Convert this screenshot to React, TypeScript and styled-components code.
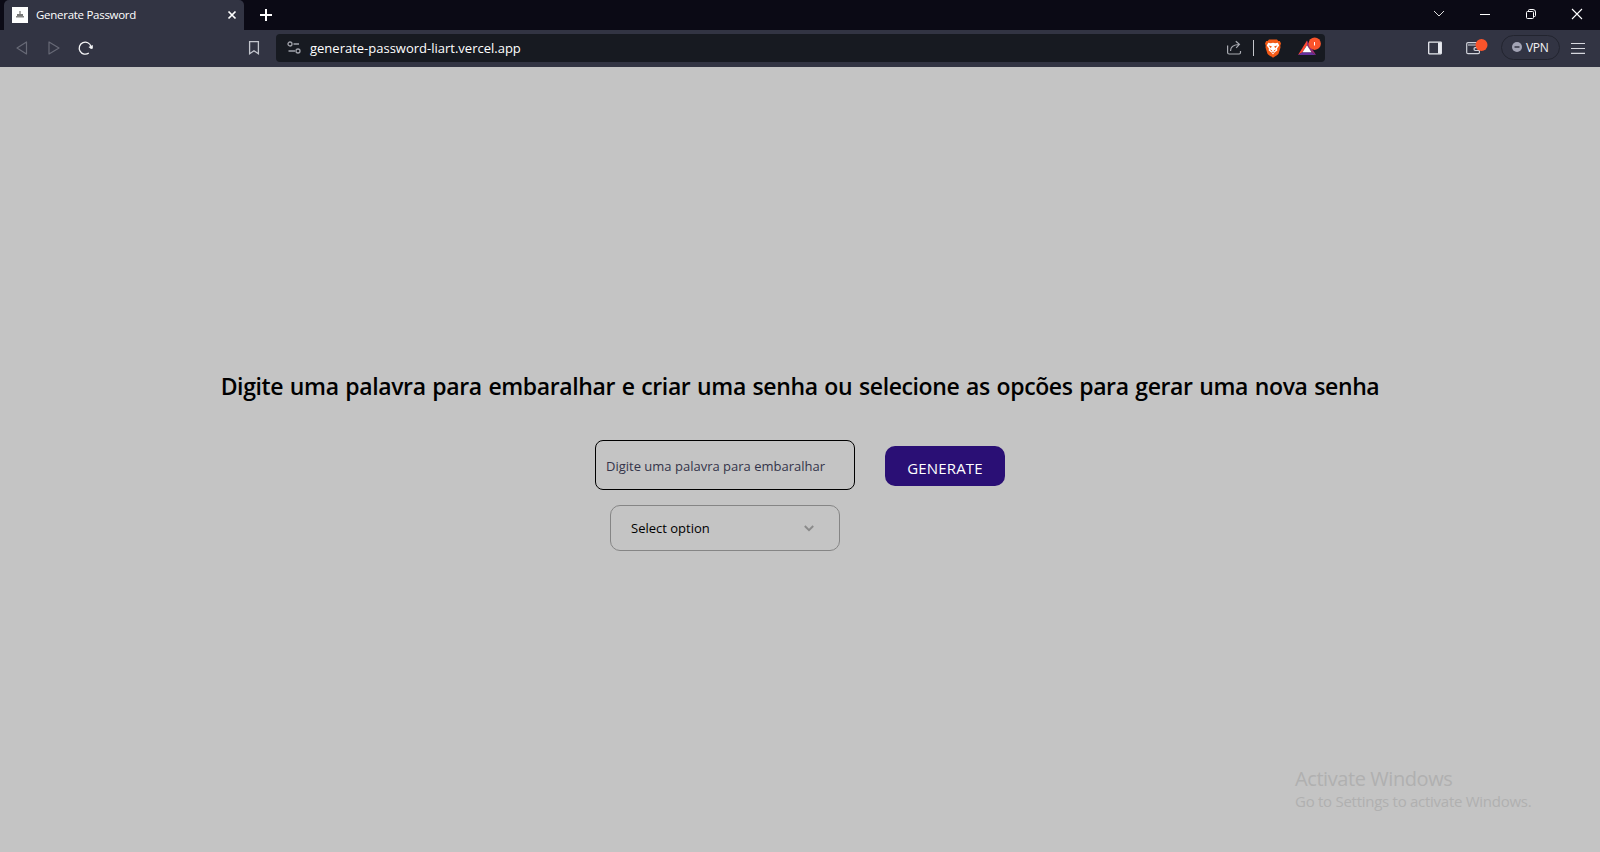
import React from "react";
import styled, { createGlobalStyle } from "styled-components";

const GlobalStyle = createGlobalStyle`
  * { box-sizing: border-box; }
  body { margin: 0; overflow: hidden; background: #c4c4c4; font-family: "Open Sans", "Noto Sans", sans-serif; }
  svg { display: block; flex: none; }
`;

const Window = styled.div`
  width: 1600px;
  height: 852px;
  display: flex;
  flex-direction: column;
  overflow: hidden;
`;

const TabBar = styled.header`
  height: 30px;
  flex: none;
  display: flex;
  background: #0b0a15;
  padding-left: 4px;
`;

const Tab = styled.div`
  width: 240px;
  height: 30px;
  display: flex;
  align-items: center;
  padding: 0 7px 0 8px;
  background: #323443;
  border-radius: 5px 5px 0 0;
`;

const Favicon = styled.span`
  width: 16px;
  height: 16px;
  margin-right: 8px;
  background: #fff;
`;

const TabTitle = styled.span`
  flex: 1;
  color: #fff;
  font-size: 11.5px;
  line-height: 16px;
  letter-spacing: -0.28px;
  white-space: nowrap;
`;

const NewTab = styled.span`
  padding: 8px 0 0 15px;
`;

const WindowControls = styled.div`
  margin-left: auto;
  display: flex;
`;

const WindowControl = styled.span`
  width: 46px;
  height: 28px;
  display: flex;
  align-items: center;
  justify-content: center;
`;

const Toolbar = styled.nav`
  height: 37px;
  flex: none;
  display: flex;
  align-items: center;
  background: #323443;
  padding: 0 15px 1px 13px;
`;

const NavButtons = styled.div`
  display: flex;
  align-items: center;
  gap: 16px;
  flex: 1;
`;

const AddressBar = styled.div`
  width: 1049px;
  height: 28px;
  margin: 0 102px 0 15px;
  padding: 0 3px 0 10px;
  display: flex;
  align-items: center;
  background: #171a21;
  border-radius: 4px;
`;

const Url = styled.span`
  flex: 1;
  margin-left: 8px;
  color: #fff;
  font-size: 13px;
  line-height: 18px;
`;

const Divider = styled.span`
  width: 1px;
  height: 16px;
  margin: 0 10px 0 11px;
  background: #c5c7cc;
`;

const RewardsIcon = styled.svg`
  margin-left: 14px;
`;

const WalletIcon = styled.svg`
  margin-left: 22px;
`;

const Tools = styled.div`
  display: flex;
  align-items: center;
`;

const VpnPill = styled.span`
  width: 59px;
  height: 25px;
  margin: 0 11px 1px 12px;
  padding: 0 0 1px 10px;
  display: flex;
  align-items: center;
  gap: 4px;
  border: 1px solid #22242f;
  border-radius: 13px;
  color: #f2f2f5;
  font-size: 12px;
  letter-spacing: -0.3px;
`;

const Page = styled.main`
  flex: 1;
  display: flex;
  flex-direction: column;
  align-items: center;
  padding-top: 303px;
`;

const Title = styled.h1`
  margin: 0;
  height: 32px;
  font-size: 23px;
  line-height: 32px;
  font-weight: 600;
  letter-spacing: -0.38px;
  word-spacing: 1.1px;
  color: #000;
  white-space: nowrap;
`;

const Form = styled.div`
  display: flex;
  gap: 30px;
  margin-top: 38px;
`;

const Fields = styled.div`
  display: flex;
  flex-direction: column;
  align-items: center;
  gap: 15px;
`;

const WordInput = styled.input`
  width: 260px;
  height: 50px;
  padding: 2px 10px 0;
  border: 1px solid #000;
  border-radius: 8px;
  background: transparent;
  outline: none;
  font: 400 13px "Open Sans", "Noto Sans", sans-serif;
  &::placeholder { color: #34344a; opacity: 1; }
`;

const Select = styled.div`
  width: 230px;
  height: 46px;
  padding: 0 25px 0 20px;
  display: flex;
  align-items: center;
  justify-content: space-between;
  border: 1px solid #858585;
  border-radius: 10px;
  color: #000;
  font-size: 13px;
`;

const GenerateButton = styled.button`
  width: 120px;
  height: 40px;
  margin-top: 6px;
  padding: 4px 0 0;
  border: 0;
  border-radius: 10px;
  background: #2a0f75;
  color: #fff;
  font: 500 15px "Open Sans", "Noto Sans", sans-serif;
  letter-spacing: 0.15px;
`;

const Watermark = styled.aside`
  margin: auto 69px 41px auto;
  width: 236px;
  color: #b0b0b0;
  white-space: nowrap;
`;

const WatermarkTitle = styled.div`
  font-size: 20px;
  line-height: 25px;
  letter-spacing: -0.42px;
`;

const WatermarkText = styled.div`
  font-size: 15px;
  line-height: 20px;
  letter-spacing: -0.27px;
`;

const stroke = (color: string, width = 1) => ({ fill: "none", stroke: color, strokeWidth: width });

export default function App() {
  return (
    <Window>
      <GlobalStyle />
      <TabBar>
        <Tab>
          <Favicon>
            <svg width="16" height="16">
              <path d="M7 4h2v3H7z" fill="#aaa" />
              <path d="M5 7h6v2H5z" fill="#777" />
              <path d="M4 9h8v1.500H4z" fill="#858585" />
            </svg>
          </Favicon>
          <TabTitle>Generate Password</TabTitle>
          <svg width="10" height="10" {...stroke("#fff", 1.7)}><path d="M1.5 1.5l7 7m0-7l-7 7" /></svg>
        </Tab>
        <NewTab><svg width="14" height="14" {...stroke("#fff", 2)}><path d="M7 1v12M1 7h12" /></svg></NewTab>
        <WindowControls>
          <WindowControl><svg width="12" height="8" {...stroke("#ddd")}><path d="M1 1l5 5 5-5" /></svg></WindowControl>
          <WindowControl><svg width="10" height="2"><path d="M0 1h10v1H0z" fill="#fff" /></svg></WindowControl>
          <WindowControl>
            <svg width="10" height="10" {...stroke("#fff")}>
              <rect x=".5" y="2.5" width="7" height="7" rx="1" />
              <path d="M2.5 2V1.5a1 1 0 0 1 1-1H7a2.5 2.5 0 0 1 2.5 2.5v3.5a1 1 0 0 1-1 1H8" />
            </svg>
          </WindowControl>
          <WindowControl><svg width="12" height="12" {...stroke("#fff", 1.1)}><path d="M1 1l10 10m0-10L1 11" /></svg></WindowControl>
        </WindowControls>
      </TabBar>
      <Toolbar>
        <NavButtons>
          <svg width="16" height="16" {...stroke("#676976", 1.2)} strokeLinejoin="round"><path d="M13.500 2v12L4 8z" /></svg>
          <svg width="16" height="16" {...stroke("#676976", 1.2)} strokeLinejoin="round"><path d="M4 2v12L14 8z" /></svg>
          <svg width="16" height="16" {...stroke("#f5f5f7", 1.3)}>
            <path d="M11.800 13A6 6 0 1 1 14 6.500" />
            <path d="M15.800 5v3.500L14 9l-2.500-2z" fill="#f5f5f7" stroke="none" />
          </svg>
        </NavButtons>
        <svg width="14" height="16" {...stroke("#c3c5cd", 1.3)}><path d="M2.6 1.6h8.8v12.2L7 10.8l-4.4 3z" /></svg>
        <AddressBar>
          <svg width="16" height="16" {...stroke("#a0a2aa", 1.3)}>
            <circle cx="4" cy="4" r="2" /><path d="M7.5 4H13M2.5 11H9" /><circle cx="12" cy="11" r="2" />
          </svg>
          <Url>generate-password-liart.vercel.app</Url>
          <svg width="16" height="16" {...stroke("#a9abb2", 1.2)}>
            <path d="M1.6 5.5v7q0 1.5 1.5 1.5h10q1.4 0 1.4-1.5V11" />
            <path d="M4.5 11q0-6 8-6.5M9.8 1.2l3.6 3.2-3.2 3.4" />
          </svg>
          <Divider />
          <svg width="18" height="19" viewBox="0 0 18 19">
            <path d="M5 .5h8l1.3 1.5h1.5L17 4.5l-.7 2 .2 2-1.9 6q-.5 1.3-5.6 4.2-5.1-2.9-5.6-4.2l-1.9-6 .2-2-.7-2L2.200 2h1.500z" fill="#f45a16" />
            <path d="M4.200 3.800l2.600.5L9 3.700l2.200.6 2.600-.5 1.400 2.800-2.100 3 .2 2-2.400 1.600L9 15.500l-1.900-2.300-2.400-1.600.2-2-2.100-3z" fill="#fff" />
            <path d="M4.600 6.500l3.200.8-1 2zM13.400 6.500l-3.200.8 1 2zM5.800 10.300l2.500 1.200-.7 1zM12.200 10.300l-2.500 1.200.7 1z" fill="#f45a16" />
            <path d="M7.300 13.200L9 12.500l1.700.7L9 14.500z" fill="#e98a60" />
          </svg>
          <RewardsIcon width="26" height="24" viewBox="0 0 26 24">
            <path d="M11 4.500L2 19l4.500-2.700L11 9z" fill="#ff4b32" />
            <path d="M2 19h18l-4.500-2.700h-9z" fill="#66309c" />
            <path d="M11 4.500V9l4.500 7.300L20 19z" fill="#9b2a73" />
            <path d="M11 9.200l4.500 7.100h-9z" fill="#fff" />
            <circle cx="18.700" cy="7.700" r="6.200" fill="#fb542b" />
            <path d="M18.500 6v3.500" stroke="#fff" />
          </RewardsIcon>
        </AddressBar>
        <Tools>
          <svg width="16" height="16" {...stroke("#e8eaf0", 1.3)}>
            <rect x="1.700" y="2.200" width="12.600" height="11.600" rx=".5" /><path d="M11 2.500h3v11h-3z" fill="#e8eaf0" stroke="none" />
          </svg>
          <WalletIcon width="24" height="20">
            <g {...stroke("#d0d2da", 1.2)}>
              <path d="M14 4.600H3q-1.300 0-1.300 1.200V14.500q0 1.200 1.300 1.200h10.200q1.200 0 1.200-1.200V7H3" />
              <path d="M14 9.700h-3.800q-1.200 0-1.200 1.400t1.200 1.400H14" />
            </g>
            <circle cx="16.500" cy="7" r="6" fill="#fb542b" />
          </WalletIcon>
          <VpnPill>
            <svg width="10" height="10"><circle cx="5" cy="5" r="5" fill="#a3a4b5" /><path d="M2.500 5h5" stroke="#343644" strokeWidth="1.500" /></svg>
            VPN
          </VpnPill>
          <svg width="14" height="12" {...stroke("#d6d7de", 1.2)}><path d="M0 1.500h14M0 6.500h14M0 11.400h14" /></svg>
        </Tools>
      </Toolbar>
      <Page>
        <Title>Digite uma palavra para embaralhar e criar uma senha ou selecione as opcões para gerar uma nova senha</Title>
        <Form>
          <Fields>
            <WordInput placeholder="Digite uma palavra para embaralhar" />
            <Select>
              Select option
              <svg width="10" height="7" {...stroke("#8a8a8a", 1.900)}><path d="M.8 1L5 5.200 9.200 1" /></svg>
            </Select>
          </Fields>
          <GenerateButton>GENERATE</GenerateButton>
        </Form>
        <Watermark>
          <WatermarkTitle>Activate Windows</WatermarkTitle>
          <WatermarkText>Go to Settings to activate Windows.</WatermarkText>
        </Watermark>
      </Page>
    </Window>
  );
}
